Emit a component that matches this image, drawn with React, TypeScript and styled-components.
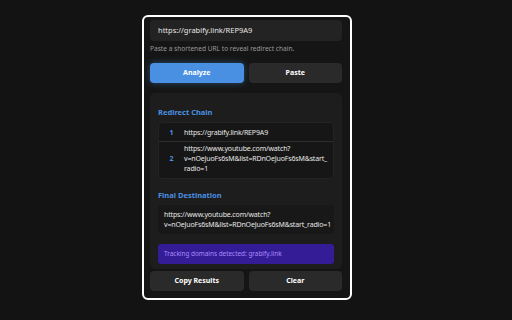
import React from "react";
import styled, { createGlobalStyle } from "styled-components";

const Global = createGlobalStyle`
  html, body { margin: 0; padding: 0; background: #131313; }
  body { font-family: "Noto Sans", "Open Sans", sans-serif; width: 512px; height: 320px; overflow: hidden; }
  * { box-sizing: border-box; }
`;

const Frame = styled.div`
  margin: 15px 0 0 142px;
  width: 210px;
  height: 285px;
  border: 2px solid #ffffff;
  border-radius: 6px;
  background: #151515;
  padding: 3px 8px 0 6px;
  display: flex;
  flex-direction: column;
  overflow: hidden;
`;

const UrlInput = styled.div`
  height: 21px;
  background: #232323;
  border-radius: 4px;
  color: #e6e6e6;
  font-size: 7.5px;
  line-height: 21px;
  padding-left: 8px;
`;

const Helper = styled.div`
  margin-top: 3px;
  font-size: 6.6px;
  line-height: 9px;
  color: #9a9a9a;
`;

const ButtonRow = styled.div<{ $mt: number }>`
  display: grid;
  grid-template-columns: 1fr 1fr;
  gap: 5px;
  margin-top: ${(p) => p.$mt}px;
`;

const Button = styled.div<{ $primary?: boolean }>`
  height: 20px;
  border-radius: 4px;
  background: ${(p) => (p.$primary ? "#4a90e2" : "#2a2a2a")};
  box-shadow: ${(p) => (p.$primary ? "0 0 7px rgba(74,144,226,0.45)" : "none")};
  color: #ffffff;
  font-weight: 700;
  font-size: 7px;
  line-height: 20px;
  text-align: center;
`;

const Results = styled.div`
  margin-top: 10px;
  background: #1d1d1d;
  border-radius: 5px;
  padding: 14px 8px 6px 8px;
  height: 176px;
`;

const SectionTitle = styled.div<{ $mt?: number }>`
  color: #4a90e2;
  font-weight: 700;
  font-size: 7.5px;
  line-height: 10px;
  margin-top: ${(p) => p.$mt ?? 0}px;
`;

const Chain = styled.div`
  margin-top: 5px;
  background: #161616;
  border: 1px solid #232323;
  border-radius: 4px;
`;

const ChainRow = styled.div<{ $pt: number; $pb: number; $sep?: boolean }>`
  display: grid;
  grid-template-columns: 25px 1fr;
  align-items: center;
  padding: ${(p) => p.$pt}px 6px ${(p) => p.$pb}px 0;
  border-bottom: ${(p) => (p.$sep ? "1px solid #2e2e2e" : "none")};
`;

const Num = styled.div`
  color: #4a90e2;
  font-weight: 700;
  font-size: 7px;
  text-align: center;
  line-height: 10px;
`;

const Url = styled.div`
  color: #e6e6e6;
  font-size: 7px;
  letter-spacing: -0.15px;
  line-height: 10px;
`;

const Line = styled.span`
  display: block;
  white-space: nowrap;
`;

const Final = styled.div`
  margin-top: 5px;
  background: #181818;
  border-radius: 4px;
  padding: 5px 6px 4px 6px;
  color: #e6e6e6;
  font-size: 7px;
  letter-spacing: -0.15px;
  line-height: 10px;
`;

const Tracking = styled.div`
  margin-top: 10px;
  height: 20px;
  background: #341c96;
  border-radius: 3px;
  color: #a78bfa;
  font-size: 6.4px;
  line-height: 20px;
  padding-left: 6px;
`;

export default function App() {
  return (
    <>
      <Global />
      <Frame>
        <UrlInput>https://grabify.link/REP9A9</UrlInput>
        <Helper>Paste a shortened URL to reveal redirect chain.</Helper>
        <ButtonRow $mt={10}>
          <Button $primary>Analyze</Button>
          <Button>Paste</Button>
        </ButtonRow>
        <Results>
          <SectionTitle>Redirect Chain</SectionTitle>
          <Chain>
            <ChainRow $pt={5} $pb={3} $sep>
              <Num>1</Num>
              <Url>https://grabify.link/REP9A9</Url>
            </ChainRow>
            <ChainRow $pt={2} $pb={4}>
              <Num>2</Num>
              <Url>
                <Line>https://www.youtube.com/watch?</Line>
                <Line>v=nOeJuoFs6sM&amp;list=RDnOeJuoFs6sM&amp;start_</Line>
                <Line>radio=1</Line>
              </Url>
            </ChainRow>
          </Chain>
          <SectionTitle $mt={11}>Final Destination</SectionTitle>
          <Final>
            <Line>https://www.youtube.com/watch?</Line>
            <Line>v=nOeJuoFs6sM&amp;list=RDnOeJuoFs6sM&amp;start_radio=1</Line>
          </Final>
          <Tracking>Tracking domains detected: grabify.link</Tracking>
        </Results>
        <ButtonRow $mt={2}>
          <Button>Copy Results</Button>
          <Button>Clear</Button>
        </ButtonRow>
      </Frame>
    </>
  );
}
